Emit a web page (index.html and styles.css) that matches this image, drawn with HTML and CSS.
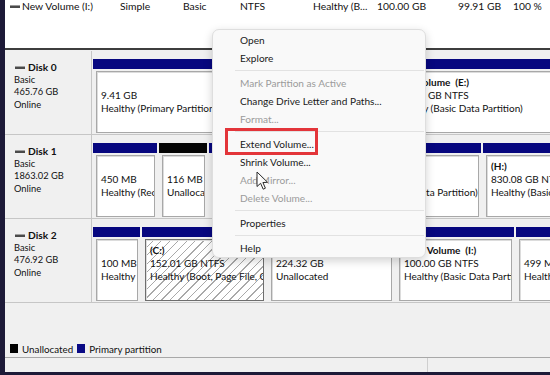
FILE: index.html
```html
<!DOCTYPE html>
<html>
<head>
<meta charset="utf-8">
<link rel="stylesheet" href="styles.css">
</head>
<body>
<div class="app">
  <div class="list">
    <div class="list-row">
      <span class="vol-icon"></span>
      <span class="c-name">New Volume (I:)</span>
      <span class="c-layout">Simple</span>
      <span class="c-type">Basic</span>
      <span class="c-fs">NTFS</span>
      <span class="c-status">Healthy (B...</span>
      <span class="c-cap">100.00 GB</span>
      <span class="c-free">99.91 GB</span>
      <span class="c-pct">100 %</span>
    </div>
  </div>
  <div class="splitter"></div>
  <div class="disks">
    <div class="disk">
      <div class="disk-label">
        <div class="disk-name"><span class="disk-icon"></span>Disk 0</div>
        <div>Basic</div>
        <div>465.76 GB</div>
        <div>Online</div>
      </div>
      <div class="parts">
        <div class="part" style="width:291px">
          <div class="bar"></div>
          <div class="body"><div class="l1">&nbsp;</div><div>9.41 GB</div><div>Healthy (Primary Partition)</div></div>
        </div>
        <div class="part" style="width:190px">
          <div class="bar"></div>
          <div class="body"><div class="l1">New Volume&nbsp; (E:)</div><div>456.35 GB NTFS</div><div>Healthy (Basic Data Partition)</div></div>
        </div>
      </div>
    </div>
    <div class="disk">
      <div class="disk-label">
        <div class="disk-name"><span class="disk-icon"></span>Disk 1</div>
        <div>Basic</div>
        <div>1863.02 GB</div>
        <div>Online</div>
      </div>
      <div class="parts">
        <div class="part" style="width:64px">
          <div class="bar"></div>
          <div class="body"><div class="l1">&nbsp;</div><div>450 MB</div><div>Healthy (Recovery Partition)</div></div>
        </div>
        <div class="part" style="width:48px">
          <div class="bar unalloc"></div>
          <div class="body"><div class="l1">&nbsp;</div><div>116 MB</div><div>Unallocated</div></div>
        </div>
        <div class="part" style="width:130px">
          <div class="bar"></div>
          <div class="body"><div class="l1">New Volume&nbsp; (F:)</div><div>500.00 GB NTFS</div><div>Healthy (Basic Data Partition)</div></div>
        </div>
        <div class="part" style="width:140px">
          <div class="bar"></div>
          <div class="body"><div class="l1">New Volume&nbsp; (G:)</div><div>532.47 GB NTFS</div><div>Healthy (Basic Data Partition)</div></div>
        </div>
        <div class="part" style="width:90px">
          <div class="bar"></div>
          <div class="body"><div class="l1">(H:)</div><div>830.08 GB NTFS</div><div>Healthy (Basic Data Partition)</div></div>
        </div>
      </div>
    </div>
    <div class="disk">
      <div class="disk-label">
        <div class="disk-name"><span class="disk-icon"></span>Disk 2</div>
        <div>Basic</div>
        <div>476.92 GB</div>
        <div>Online</div>
      </div>
      <div class="parts">
        <div class="part" style="width:47px">
          <div class="bar"></div>
          <div class="body"><div class="l1">&nbsp;</div><div>100 MB</div><div>Healthy (EFI System Partition)</div></div>
        </div>
        <div class="part" style="width:124px">
          <div class="bar"></div>
          <div class="body selected"><div class="l1">(C:)</div><div>152.01 GB NTFS</div><div>Healthy (Boot, Page File, Crash Dump, Basic Data Partition)</div></div>
        </div>
        <div class="part" style="width:126px">
          <div class="bar unalloc"></div>
          <div class="body"><div class="l1">&nbsp;</div><div>224.32 GB</div><div>Unallocated</div></div>
        </div>
        <div class="part" style="width:118px">
          <div class="bar"></div>
          <div class="body"><div class="l1">New Volume&nbsp; (I:)</div><div>100.00 GB NTFS</div><div>Healthy (Basic Data Partition)</div></div>
        </div>
        <div class="part" style="width:60px">
          <div class="bar"></div>
          <div class="body"><div class="l1">&nbsp;</div><div>499 MB</div><div>Healthy (Recovery Partition)</div></div>
        </div>
      </div>
    </div>
    <div class="filler"></div>
  </div>
  <div class="legend">
    <span class="swatch black"></span><span class="legend-text">Unallocated</span>
    <span class="swatch blue"></span><span class="legend-text">Primary partition</span>
  </div>
  <div class="status">
    <div class="status-cell"></div>
    <div class="status-cell last"></div>
  </div>
</div>

<div class="menu">
  <div class="mi">Open</div>
  <div class="mi">Explore</div>
  <div class="sep"></div>
  <div class="mi dis">Mark Partition as Active</div>
  <div class="mi">Change Drive Letter and Paths...</div>
  <div class="mi dis">Format...</div>
  <div class="sep"></div>
  <div class="mi">Extend Volume...</div>
  <div class="mi">Shrink Volume...</div>
  <div class="mi dis">Add Mirror...</div>
  <div class="mi dis">Delete Volume...</div>
  <div class="sep"></div>
  <div class="mi">Properties</div>
  <div class="sep"></div>
  <div class="mi">Help</div>
</div>

<div class="highlight"></div>

<svg class="cursor" width="14" height="20" viewBox="0 0 14 20">
  <path d="M1 1 L1 15.5 L4.6 12.3 L7.2 18.2 L9.4 17.2 L6.9 11.5 L11.6 11.3 Z" fill="rgba(255,255,255,0.85)" stroke="#2a2a2a" stroke-width="1" stroke-linejoin="round"/>
</svg>
</body>
</html>
```

FILE: styles.css
```css
* { box-sizing: border-box; }

body {
  margin: 0;
  width: 550px;
  height: 375px;
  overflow: hidden;
  position: relative;
  background: #1d1a38;
  font-family: Lato, "Noto Sans", sans-serif;
  color: #000;
}

.app {
  margin-left: 5px;
  width: 545px;
  height: 372px;
  background: #f0f0f0;
  display: flex;
  flex-direction: column;
  overflow: hidden;
}

/* top volume list */
.list {
  height: 48px;
  flex: none;
  background: #fff;
  overflow: hidden;
}
.list-row {
  display: flex;
  align-items: center;
  height: 14px;
  margin-top: -1px;
  padding-left: 5px;
  font-size: 10.3px;
  white-space: nowrap;
  color: #111;
}
.vol-icon {
  width: 10px;
  height: 3px;
  background: #4a4a4a;
  border-top: 1px solid #9a9a9a;
  margin-right: 2px;
  flex: none;
}
.list-row span { flex: none; }
.c-name { width: 98px; }
.c-layout { width: 63px; }
.c-type { width: 57px; }
.c-fs { width: 73px; }
.c-status { width: 64px; }
.c-cap { width: 81px; }
.c-free { width: 55px; }

.splitter {
  height: 2px;
  flex: none;
  background: #3e3e3e;
}

/* disks */
.disks {
  flex: 1;
  display: flex;
  flex-direction: column;
  padding-top: 1px;
  min-height: 0;
}
.disk {
  display: flex;
  height: 84px;
  flex: none;
  border-bottom: 1px solid #c6c6c6;
}
.disk-label {
  width: 87px;
  flex: none;
  border-right: 1px solid #c6c6c6;
  padding: 10px 0 0 9px;
  font-size: 9.3px;
  line-height: 12.7px;
  color: #111;
}
.disk-name {
  display: flex;
  align-items: center;
  font-weight: bold;
  font-size: 10.2px;
}
.disk-icon {
  width: 10px;
  height: 3px;
  background: #4a4a4a;
  border-top: 1px solid #a0a0a0;
  margin: 0 3px 0 1px;
}
.parts {
  flex: 1;
  min-width: 0;
  display: flex;
  gap: 2px;
  padding: 8px 0 0 1px;
  overflow: hidden;
}
.part {
  flex: none;
  display: flex;
  flex-direction: column;
}
.bar {
  height: 10px;
  flex: none;
  background: #07077f;
}
.bar.unalloc { background: #050505; }
.body {
  flex: 1;
  margin: 2px 2px 1px 3px;
  border: 1px solid #a8a8a8;
  box-shadow: inset 1px 1px 0 #dcdcdc;
  background: #fff;
  padding: 4px 4px 0 4px;
  overflow: hidden;
  white-space: nowrap;
  font-size: 10px;
  line-height: 13px;
  color: #111;
}
.body .l1 { font-weight: bold; }
.body.selected {
  border-color: #6e6e6e;
  background: repeating-linear-gradient(135deg, #ffffff 0 5px, #a9a9a9 5px 6px);
}
.filler { flex: 1; }

/* legend + status */
.legend {
  height: 17px;
  flex: none;
  display: flex;
  align-items: center;
  padding-left: 5px;
  font-size: 9.8px;
  color: #111;
}
.swatch {
  width: 8px;
  height: 9px;
  margin-right: 4px;
}
.swatch.black { background: #000; }
.swatch.blue { background: #0a0a85; margin-left: 4px; }
.status {
  height: 15px;
  flex: none;
  display: flex;
  border-top: 1px solid #a8a8a8;
}
.status-cell {
  width: 423px;
  border-right: 1px solid #cfcfcf;
}
.status-cell.last { flex: 1; border-right: 0; }

/* context menu */
.menu {
  position: absolute;
  left: 212px;
  top: 29px;
  width: 214px;
  height: 229px;
  background: #f9f9f9;
  border: 1px solid #dedede;
  border-radius: 7px;
  box-shadow: 0 3px 10px rgba(0, 0, 0, 0.18);
  padding: 1px 0 2px;
  font-size: 10.1px;
  color: #1a1a1a;
}
.mi {
  height: 18px;
  line-height: 18px;
  padding-left: 27px;
  white-space: nowrap;
}
.mi.dis { color: #9b9b9b; }
.sep {
  height: 1px;
  background: #e2e2e2;
  margin: 3px 1px 3px 22px;
}

.highlight {
  position: absolute;
  left: 225px;
  top: 128px;
  width: 93px;
  height: 27px;
  border: 3px solid #e3353a;
}

.cursor {
  position: absolute;
  left: 256px;
  top: 171px;
}
```
